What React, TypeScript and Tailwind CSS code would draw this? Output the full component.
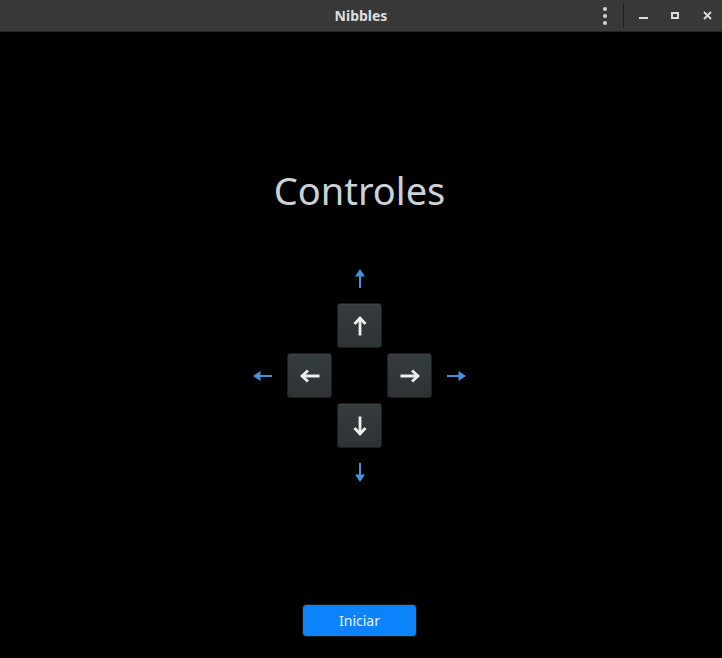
import { ReactNode } from 'react'

const font = { fontFamily: '"Noto Sans", "DejaVu Sans", sans-serif' }

function KeyArrow({ rotate }: { rotate: number }) {
  return (
    <svg width="22" height="22" viewBox="0 0 22 22" style={{ transform: `rotate(${rotate}deg)` }}>
      <path d="M11 20.5 V3.5" stroke="#eeeeec" strokeWidth="2.8" fill="none" />
      <path d="M5.5 9 L11 3 L16.5 9" stroke="#eeeeec" strokeWidth="2.8" fill="none" strokeLinejoin="miter" />
    </svg>
  )
}

function BlueArrow({ rotate }: { rotate: number }) {
  return (
    <svg width="20" height="20" viewBox="0 0 20 20" style={{ transform: `rotate(${rotate}deg)` }}>
      <path d="M10 20 V6" stroke="#4a90d9" strokeWidth="2" fill="none" />
      <path d="M5 8.5 L10 1 L15 8.5 Z" fill="#4a90d9" />
    </svg>
  )
}

function Key({ children }: { children: ReactNode }) {
  return (
    <div className="w-[45px] h-[45px] rounded-[3px] border border-[#1c1f20] bg-gradient-to-b from-[#363c3e] to-[#2d3234] flex items-center justify-center shadow-[inset_0_1px_0_rgba(255,255,255,0.04)]">
      {children}
    </div>
  )
}

function Cell({ children }: { children?: ReactNode }) {
  return <div className="flex items-center justify-center">{children}</div>
}

export default function App() {
  return (
    <div className="w-[722px] h-[658px] bg-black flex flex-col overflow-hidden" style={font}>
      {/* Title bar */}
      <div className="relative h-8 bg-[#383838] border-b border-[#262626] flex items-center justify-center shrink-0">
        <span className="text-[14px] font-bold text-[#dedede]">Nibbles</span>
        <div className="absolute right-0 top-0 h-full flex items-center">
          <div className="flex flex-col gap-[3px] items-center mr-[16px]">
            <span className="w-[4px] h-[4px] rounded-full bg-[#d6d6d6]" />
            <span className="w-[4px] h-[4px] rounded-full bg-[#d6d6d6]" />
            <span className="w-[4px] h-[4px] rounded-full bg-[#d6d6d6]" />
          </div>
          <div className="w-px h-[25px] bg-[#202020] mr-[15px]" />
          <div className="w-[9px] h-[2px] bg-[#dcdcdc] mt-[5px] mr-[23px]" />
          <div className="w-[8px] h-[7px] border-2 border-[#dcdcdc] mr-[24px]" />
          <svg width="9" height="9" viewBox="0 0 9 9" className="mr-[10px]">
            <path d="M1 1 L8 8 M8 1 L1 8" stroke="#dcdcdc" strokeWidth="1.8" />
          </svg>
        </div>
      </div>

      {/* Content */}
      <div className="flex flex-col items-center pr-[3px]">
        <h1 className="mt-[139px] text-[38px] leading-[38px] text-[#c9d1d9]">Controles</h1>

        <div className="mt-[49px] grid grid-cols-[40px_45px_45px_45px_40px] grid-rows-[40px_45px_45px_45px_40px] gap-[5px]">
          <Cell />
          <Cell />
          <Cell><BlueArrow rotate={0} /></Cell>
          <Cell />
          <Cell />

          <Cell />
          <Cell />
          <Key><KeyArrow rotate={0} /></Key>
          <Cell />
          <Cell />

          <Cell><BlueArrow rotate={-90} /></Cell>
          <Key><KeyArrow rotate={-90} /></Key>
          <Cell />
          <Key><KeyArrow rotate={90} /></Key>
          <Cell><BlueArrow rotate={90} /></Cell>

          <Cell />
          <Cell />
          <Key><KeyArrow rotate={180} /></Key>
          <Cell />
          <Cell />

          <Cell />
          <Cell />
          <Cell><BlueArrow rotate={180} /></Cell>
          <Cell />
          <Cell />
        </div>

        <button className="mt-[111px] w-[115px] h-[33px] rounded-[4px] border border-[#1a1a1a] bg-[#0c83fa] text-[14px] text-[#eaf2ff]">
          Iniciar
        </button>
      </div>
    </div>
  )
}
